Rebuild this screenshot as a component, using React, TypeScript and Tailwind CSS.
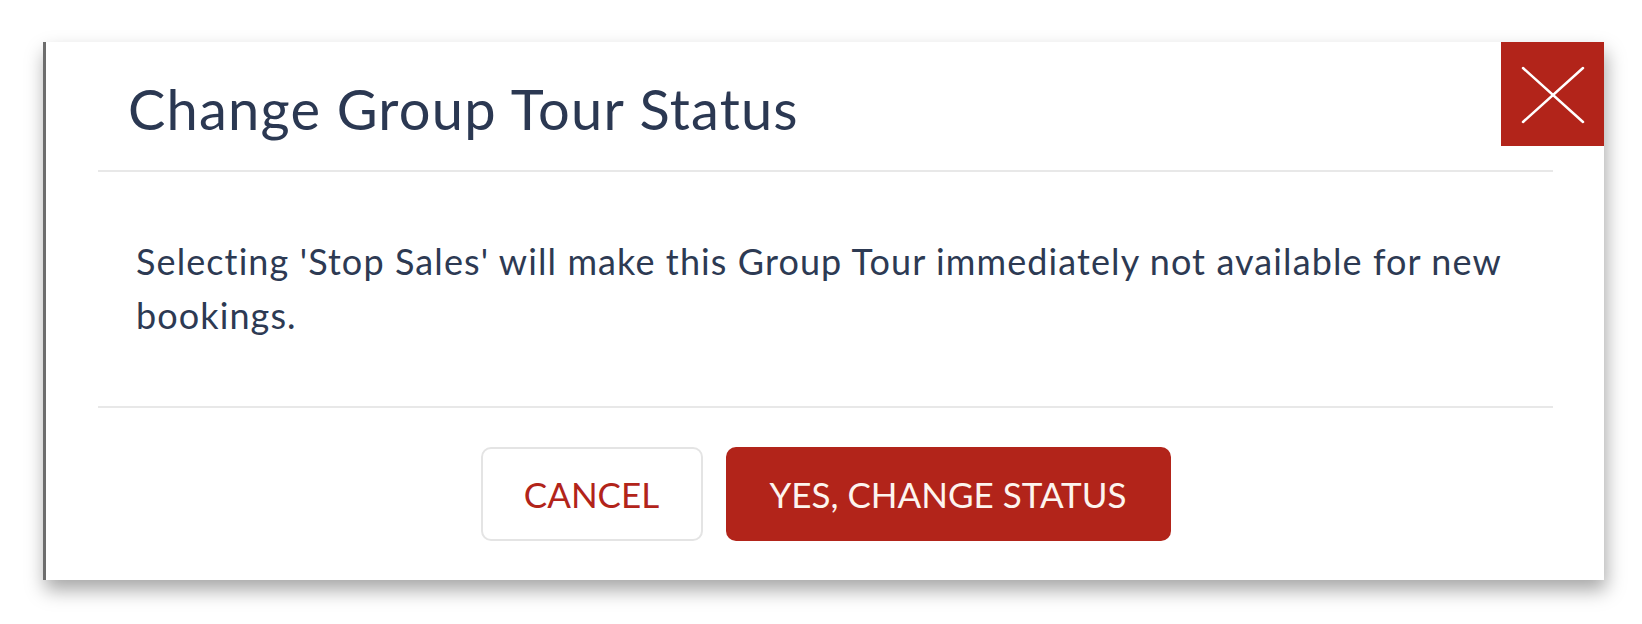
import React from 'react';

export default function App() {
  return (
    <div
      className="min-h-screen bg-white pt-[42px] pl-[43px]"
      style={{ fontFamily: 'Lato, "Open Sans", sans-serif' }}
    >
      <div className="relative w-[1561px] h-[538px] bg-white border-l-[3px] border-[#6d6d6d] shadow-[2px_10px_18px_rgba(0,0,0,0.35)]">
        <button className="absolute top-0 right-0 w-[103px] h-[104px] bg-[#b2241a] flex items-center justify-center">
          <svg width="103" height="104" viewBox="0 0 103 104" fill="none">
            <line x1="22" y1="26" x2="82" y2="80" stroke="#fff" strokeWidth="2.5" strokeLinecap="round" />
            <line x1="82" y1="26" x2="22" y2="80" stroke="#fff" strokeWidth="2.5" strokeLinecap="round" />
          </svg>
        </button>

        <div className="pl-[52px] pr-[51px]">
          <div className="h-[128px] pt-[39px] pl-[30px]">
            <h1 className="text-[56px] leading-[56px] tracking-[1.2px] text-[#2b3852]">Change Group Tour Status</h1>
          </div>
          <div className="h-[2px] bg-[#e8e8e8]" />

          <div className="pt-[62px] pb-[64px] pl-[38px] pr-[20px]">
            <p className="text-[36px] leading-[54px] tracking-[1.1px] text-[#2d3a53]">
              Selecting 'Stop Sales' will make this Group Tour immediately not available for new bookings.
            </p>
          </div>
          <div className="h-[2px] bg-[#e8e8e8]" />

          <div className="flex justify-center gap-[23px] pt-[39px]">
            <button className="w-[222px] h-[94px] rounded-[10px] border-2 border-[#e4e4e4] bg-white text-[35px] text-[#b2241a]">
              CANCEL
            </button>
            <button className="w-[445px] h-[94px] rounded-[10px] bg-[#b2241a] text-[35px] text-[#fdf4ee]">
              YES, CHANGE STATUS
            </button>
          </div>
        </div>
      </div>
    </div>
  );
}
